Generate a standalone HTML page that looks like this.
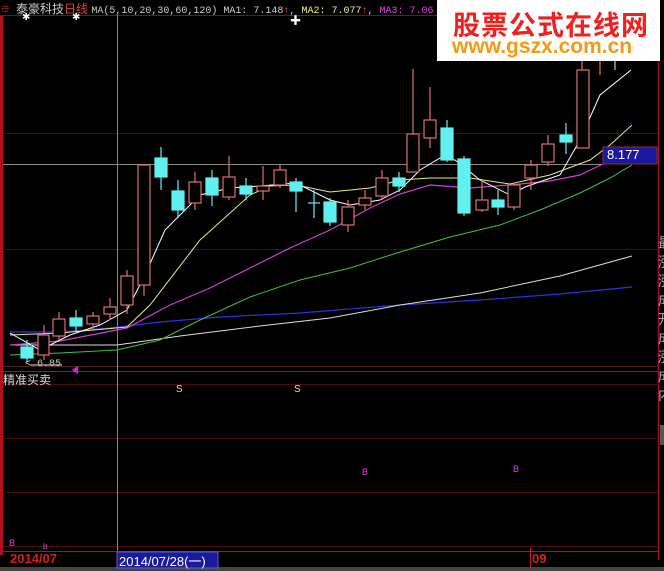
<!DOCTYPE html>
<html><head><meta charset="utf-8"><style>
body{margin:0;background:#000;width:664px;height:571px;overflow:hidden;position:relative;font-family:"Liberation Sans","Noto Sans CJK SC",sans-serif}
.t{position:absolute;white-space:nowrap}
</style></head><body>
<svg width="664" height="571" style="position:absolute;left:0;top:0" xmlns="http://www.w3.org/2000/svg">
<rect width="664" height="571" fill="#000"/>
<rect x="0" y="15" width="3" height="540" fill="#b01020"/>
<line x1="658.5" y1="15" x2="658.5" y2="560" stroke="#a01020" stroke-width="1.5"/>
<line x1="0" y1="15.5" x2="658" y2="15.5" stroke="#801010"/>
<line x1="3" y1="133.5" x2="658" y2="133.5" stroke="#500808"/>
<line x1="3" y1="249.5" x2="658" y2="249.5" stroke="#500808"/>
<line x1="3" y1="366.5" x2="658" y2="366.5" stroke="#502020"/>
<line x1="3" y1="371.5" x2="658" y2="371.5" stroke="#b01020"/>
<line x1="3" y1="384.5" x2="658" y2="384.5" stroke="#500808"/>
<line x1="3" y1="438.5" x2="658" y2="438.5" stroke="#500808"/>
<line x1="3" y1="492.5" x2="658" y2="492.5" stroke="#500808"/>
<line x1="3" y1="546.5" x2="658" y2="546.5" stroke="#500808"/>
<line x1="3" y1="551.5" x2="658" y2="551.5" stroke="#b01020"/>
<rect x="0" y="567" width="664" height="4" fill="#444"/>
<line x1="117.5" y1="15" x2="117.5" y2="551" stroke="#888"/>
<line x1="3" y1="164.5" x2="603" y2="164.5" stroke="#888"/>
<polyline fill="none" stroke="#3030e0" stroke-width="1.2" points="10,332 60,332 110,328 160,322 220,317 300,313 400,305 480,300 560,294 632,287"/>
<polyline fill="none" stroke="#ddd" stroke-width="1" points="10,345 60,345 117,345 180,336 260,326 330,318 400,305 480,293 560,276 632,256"/>
<polyline fill="none" stroke="#40c040" stroke-width="1" points="10,355 60,353 117,350 160,340 200,320 250,297 300,280 350,268 400,252 450,237 500,225 540,210 580,193 610,178 632,165"/>
<polyline fill="none" stroke="#d040d0" stroke-width="1.2" points="10,345 60,341 127,328 170,305 210,288 250,268 290,248 330,230 370,208 400,194 430,185 470,188 510,185 550,181 580,175 603,164 632,155"/>
<polyline fill="none" stroke="#e8e880" stroke-width="1" points="10,335 60,333 127,327 150,305 200,240 250,195 270,186 296,185 330,192 370,188 400,180 430,178 470,178 510,184 550,175 590,160 610,145 632,125"/>
<polyline fill="none" stroke="#fff" stroke-width="1" points="10,333 40,350 70,335 100,325 127,310 145,275 165,230 200,195 230,188 260,186 296,183 330,200 350,205 380,200 400,190 420,170 440,158 455,160 480,180 510,195 525,187 545,180 560,175 580,140 600,95 631,70"/>
<g stroke="#e07070" fill="#000" stroke-width="1.2">
<line x1="44" y1="325" x2="44" y2="360"/><rect x="38" y="335" width="11" height="20"/>
<line x1="59" y1="312" x2="59" y2="340"/><rect x="53" y="319" width="12" height="17"/>
<line x1="93" y1="312" x2="93" y2="330"/><rect x="87" y="316" width="12" height="8"/>
<line x1="110" y1="298" x2="110" y2="320"/><rect x="104" y="307" width="12" height="7"/>
<line x1="127" y1="270" x2="127" y2="314"/><rect x="121" y="276" width="12" height="29"/>
<line x1="144" y1="165" x2="144" y2="296"/><rect x="138" y="165" width="12" height="120"/>
<line x1="195" y1="172" x2="195" y2="210"/><rect x="189" y="182" width="12" height="21"/>
<line x1="229" y1="156" x2="229" y2="200"/><rect x="223" y="177" width="12" height="20"/>
<line x1="263" y1="166" x2="263" y2="200"/><rect x="257" y="186" width="12" height="5"/>
<line x1="280" y1="165" x2="280" y2="188"/><rect x="274" y="170" width="12" height="15"/>
<line x1="348" y1="200" x2="348" y2="232"/><rect x="342" y="207" width="12" height="18"/>
<line x1="365" y1="190" x2="365" y2="210"/><rect x="359" y="198" width="12" height="7"/>
<line x1="382" y1="170" x2="382" y2="200"/><rect x="376" y="178" width="12" height="18"/>
<line x1="413" y1="69" x2="413" y2="172"/><rect x="407" y="134" width="12" height="38"/>
<line x1="430" y1="87" x2="430" y2="148"/><rect x="424" y="120" width="12" height="18"/>
<line x1="482" y1="180" x2="482" y2="212"/><rect x="476" y="200" width="12" height="10"/>
<line x1="514" y1="183" x2="514" y2="210"/><rect x="508" y="185" width="12" height="22"/>
<line x1="531" y1="160" x2="531" y2="190"/><rect x="525" y="165" width="12" height="13"/>
<line x1="548" y1="135" x2="548" y2="166"/><rect x="542" y="144" width="12" height="18"/>
<line x1="582" y1="60" x2="582" y2="148"/><rect x="577" y="70" width="12" height="78"/>
<line x1="600" y1="60" x2="600" y2="75"/>
</g>
<g stroke="#60f0f0" fill="#60f0f0" stroke-width="1.2">
<line x1="27" y1="340" x2="27" y2="362"/><rect x="21" y="347" width="12" height="11"/>
<line x1="76" y1="310" x2="76" y2="332"/><rect x="70" y="318" width="12" height="8"/>
<line x1="161" y1="147" x2="161" y2="190"/><rect x="155" y="158" width="12" height="19"/>
<line x1="178" y1="180" x2="178" y2="218"/><rect x="172" y="191" width="12" height="19"/>
<line x1="212" y1="170" x2="212" y2="206"/><rect x="206" y="178" width="12" height="17"/>
<line x1="246" y1="178" x2="246" y2="200"/><rect x="240" y="186" width="12" height="8"/>
<line x1="296" y1="178" x2="296" y2="212"/><rect x="290" y="182" width="12" height="9"/>
<line x1="314" y1="190" x2="314" y2="218"/><line x1="308" y1="203" x2="320" y2="203"/>
<line x1="330" y1="198" x2="330" y2="226"/><rect x="324" y="202" width="12" height="20"/>
<line x1="399" y1="172" x2="399" y2="192"/><rect x="393" y="178" width="12" height="8"/>
<line x1="447" y1="120" x2="447" y2="162"/><rect x="441" y="128" width="12" height="32"/>
<line x1="464" y1="156" x2="464" y2="216"/><rect x="458" y="159" width="12" height="54"/>
<line x1="498" y1="190" x2="498" y2="215"/><rect x="492" y="200" width="12" height="7"/>
<line x1="566" y1="123" x2="566" y2="154"/><rect x="560" y="135" width="12" height="7"/>
<line x1="615" y1="60" x2="615" y2="70"/>
</g>
<line x1="30" y1="365" x2="62" y2="365" stroke="#ddd"/>
<polygon points="72,370 78,366 78,374" fill="#e020e0"/>
<rect x="603" y="147" width="54" height="17" fill="#1a1aa0" stroke="#a02040"/>
<rect x="437" y="0" width="223" height="61" fill="#fff"/>
<rect x="117" y="552" width="101" height="16" fill="#1a1aa0" stroke="#6060c0"/>
<line x1="530.5" y1="548" x2="530.5" y2="568" stroke="#c02020"/>
<rect x="660" y="425" width="4" height="20" fill="#555"/>
</svg>
<div class="t" style="left:1px;top:1px;color:#f03030;font-size:11px">⯐</div>
<div class="t" style="left:16px;top:0;font-size:12px;color:#ccc">泰豪科技<span style="color:#e04040">日线</span> <span style="font-family:'Liberation Mono',monospace;font-size:10px;color:#ccc">MA(5,10,20,30,60,120) MA1: 7.148<span style="color:#f04040">↑</span>, <span style="color:#f0f080">MA2: 7.077</span><span style="color:#f04040">↑</span>, <span style="color:#e040e0">MA3: 7.06</span></span></div>
<div class="t" style="left:22px;top:12px;color:#fff;font-size:10px">✱</div>
<div class="t" style="left:72px;top:12px;color:#fff;font-size:10px">✱</div>
<div class="t" style="left:290px;top:12px;color:#fff;font-size:11px">✚</div>
<div class="t" style="left:453px;top:4px;color:#f02020;font-size:27px;font-weight:bold;letter-spacing:1px">股票公式在线网</div>
<div class="t" style="left:452px;top:35px;color:#f59a10;font-size:21px;font-weight:bold">www.gszx.com.cn</div>
<div class="t" style="left:607px;top:147px;color:#fff;font-size:13px">8.177</div>
<div class="t" style="left:25px;top:359px;color:#ccc;font-size:10px;font-family:'Liberation Mono',monospace">&lt; 6.85</div>
<div class="t" style="left:3px;top:371px;color:#ddd;font-size:12px">精准买卖</div>
<div class="t" style="left:176px;top:384px;color:#f0e080;font-size:10px">S</div>
<div class="t" style="left:294px;top:384px;color:#f0e080;font-size:10px">S</div>
<div class="t" style="left:362px;top:467px;color:#e040e0;font-size:9px">B</div>
<div class="t" style="left:513px;top:464px;color:#e040e0;font-size:9px">B</div>
<div class="t" style="left:9px;top:538px;color:#e040e0;font-size:9px">B</div>
<div class="t" style="left:43px;top:542px;color:#e040e0;font-size:8px">b</div>
<div class="t" style="left:10px;top:551px;color:#d02020;font-size:13px;font-weight:bold">2014/07</div>
<div class="t" style="left:119px;top:551px;color:#fff;font-size:13px">2014/07/28(一)</div>
<div class="t" style="left:532px;top:551px;color:#d02020;font-size:13px;font-weight:bold">09</div>
<div class="t" style="left:658px;top:234px;color:#aaa;font-size:14px;line-height:19px;white-space:normal;width:14px">最涨涨成开成涨成内</div>
</body></html>
